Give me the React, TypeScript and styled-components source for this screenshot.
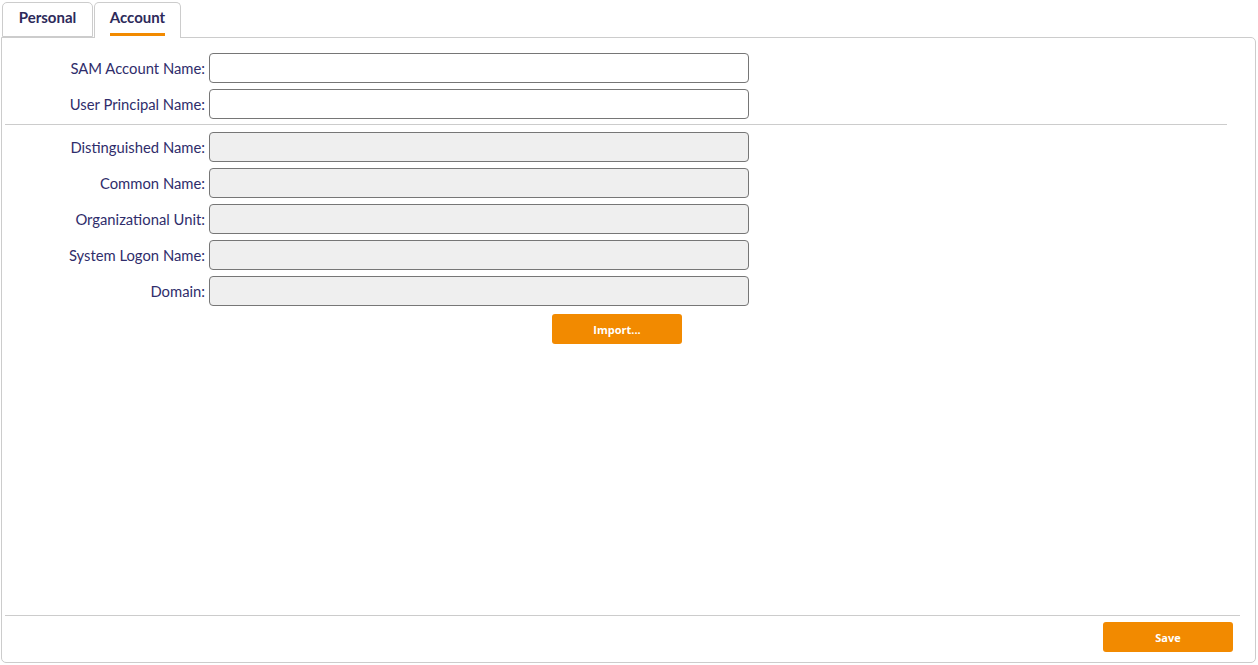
import React from "react";
import styled, { createGlobalStyle } from "styled-components";

const Global = createGlobalStyle`
  html, body { margin: 0; padding: 0; background: #ffffff; }
  body { font-family: Lato, "Open Sans", sans-serif; }
  * { box-sizing: border-box; }
`;

const Page = styled.div`
  width: 1258px;
  height: 665px;
  padding: 2px 2px 2px 1px;
  display: flex;
  flex-direction: column;
`;

const TabBar = styled.div`
  display: flex;
  gap: 1px;
  padding-left: 1px;
  height: 35px;
  position: relative;
  z-index: 1;
`;

const Tab = styled.div<{ $active?: boolean }>`
  width: ${(p) => (p.$active ? "87px" : "91px")};
  height: ${(p) => (p.$active ? "36px" : "35px")};
  border: 1px solid #cccccc;
  border-bottom: ${(p) => (p.$active ? "none" : "1px solid #cccccc")};
  border-radius: 5px 5px 0 0;
  background: #ffffff;
  display: flex;
  flex-direction: column;
  align-items: center;
  padding-top: 6px;
  font-size: 15px;
  font-weight: 700;
  color: #2d2a5a;
`;

const TabLabel = styled.span<{ $active?: boolean }>`
  display: inline-block;
  padding-bottom: 7px;
  border-bottom: 3px solid ${(p) => (p.$active ? "#f28a00" : "transparent")};
  line-height: 17px;
`;

const Panel = styled.div`
  flex: 1;
  border: 1px solid #cccccc;
  border-radius: 0 5px 5px 5px;
  display: flex;
  flex-direction: column;
  padding-top: 15px;
`;

const Form = styled.div`
  display: grid;
  grid-template-columns: 203px 540px;
  column-gap: 4px;
  row-gap: 6px;
  align-items: center;
`;

const Label = styled.label`
  text-align: right;
  font-size: 14.8px;
  color: #2f2d6b;
  line-height: 30px;
  white-space: nowrap;
`;

const Input = styled.input<{ $disabled?: boolean }>`
  height: 30px;
  width: 540px;
  border: 1px solid #767676;
  border-radius: 4px;
  background: ${(p) => (p.$disabled ? "#efefef" : "#ffffff")};
  padding: 0 6px;
  font-family: inherit;
  font-size: 14px;
  outline: none;
`;

const Divider = styled.hr`
  border: none;
  border-top: 1px solid #cccccc;
  margin: -1px 0 1px 3px;
  width: 1222px;
  height: 0;
`;

const FullRow = styled.div`
  grid-column: 1 / -1;
`;

const Spacer = styled.div`
  flex: 1;
`;

const FooterLine = styled.div`
  border-top: 1px solid #cccccc;
  margin: 0 15px 0 3px;
`;

const Footer = styled.div`
  display: flex;
  justify-content: flex-end;
  padding: 6px 22px 10px 0;
`;

const Button = styled.button<{ $offset?: number }>`
  width: 130px;
  height: 30px;
  margin-left: ${(p) => p.$offset ?? 0}px;
  background: #f28a00;
  color: #ffffff;
  border: none;
  border-radius: 3px;
  font-family: "Open Sans", sans-serif;
  font-weight: 700;
  font-size: 11px;
  cursor: pointer;
`;

const ImportRow = styled.div`
  grid-column: 2;
  padding-top: 2px;
`;

export default function App() {
  const top = ["SAM Account Name:", "User Principal Name:"];
  const bottom = [
    "Distinguished Name:",
    "Common Name:",
    "Organizational Unit:",
    "System Logon Name:",
    "Domain:",
  ];
  return (
    <Page>
      <Global />
      <TabBar>
        <Tab>
          <TabLabel>Personal</TabLabel>
        </Tab>
        <Tab $active>
          <TabLabel $active>Account</TabLabel>
        </Tab>
      </TabBar>
      <Panel>
        <Form>
          {top.map((l) => (
            <React.Fragment key={l}>
              <Label>{l}</Label>
              <Input />
            </React.Fragment>
          ))}
          <FullRow>
            <Divider />
          </FullRow>
          {bottom.map((l) => (
            <React.Fragment key={l}>
              <Label>{l}</Label>
              <Input $disabled disabled />
            </React.Fragment>
          ))}
          <ImportRow>
            <Button $offset={343}>Import...</Button>
          </ImportRow>
        </Form>
        <Spacer />
        <FooterLine />
        <Footer>
          <Button>Save</Button>
        </Footer>
      </Panel>
    </Page>
  );
}
